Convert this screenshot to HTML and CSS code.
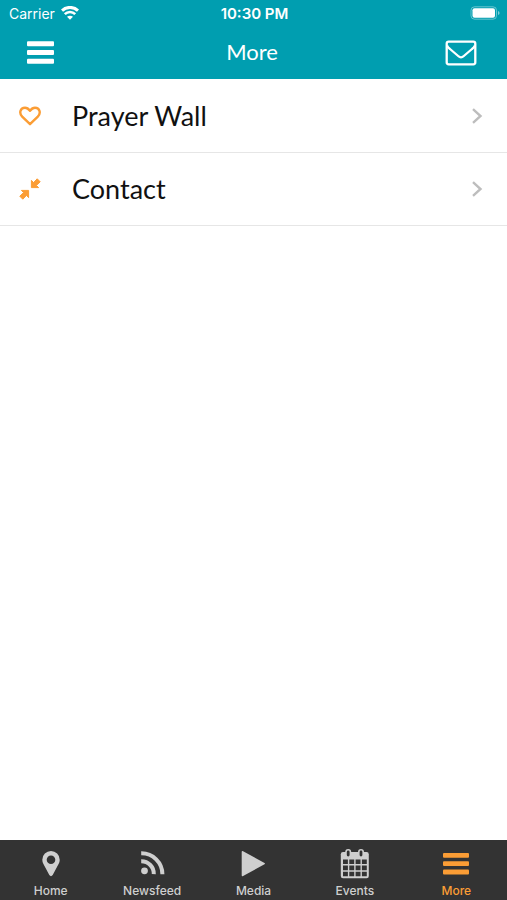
FILE: index.html
```html
<!DOCTYPE html>
<html lang="en">
<head>
  <meta charset="UTF-8">
  <meta name="viewport" content="width=device-width, initial-scale=1">
  <title>More</title>
  <link rel="stylesheet" href="styles.css">
</head>
<body>

  <header class="header">
    <div class="status-bar">
      <div class="carrier">
        <span>Carrier</span>
        <svg width="18" height="14" viewBox="0 0 18 14" fill="none" stroke="#fff" stroke-width="3">
          <path d="M1 4.600a11.6 11.6 0 0 1 16 0"/>
          <path d="M3.800 8.200a7.400 7.400 0 0 1 10.400 0" stroke-width="2.6"/>
          <path d="M6 10.800Q9 8.600 12 10.800L9 13.800z" fill="#fff" stroke="none"/>
        </svg>
      </div>
      <div class="time">10:30 PM</div>
      <div class="battery">
        <svg width="30" height="14" viewBox="0 0 30 14">
          <rect x="1" y="0.8" width="25.5" height="12.4" rx="3.5" fill="none" stroke="#fff" stroke-opacity="0.4"/>
          <rect x="2.5" y="2.3" width="22.5" height="9.4" rx="2" fill="#fff"/>
          <path d="M28 5v4q1.6-.7 1.6-2T28 5z" fill="#fff" fill-opacity="0.5"/>
        </svg>
      </div>
    </div>
    <div class="nav-bar">
      <button class="nav-button" type="button" aria-label="Menu">
        <svg width="27" height="23" viewBox="0 0 27 23" fill="#fff">
          <rect y="0.3" width="27" height="5" rx="1"/>
          <rect y="9" width="27" height="5" rx="1"/>
          <rect y="17.7" width="27" height="5" rx="1"/>
        </svg>
      </button>
      <h1 class="title">More</h1>
      <button class="nav-button nav-button-right" type="button" aria-label="Messages">
        <svg width="32" height="26" viewBox="0 0 32 26" fill="none" stroke="#fff" stroke-width="2.3" stroke-linejoin="round">
          <rect x="1.7" y="1.7" width="28.6" height="22.6" rx="2"/>
          <path d="M2 5.500Q3 7.500 5 9L13.200 16Q16 18.800 18.800 16L27 9Q29 7.500 30 5.500"/>
        </svg>
      </button>
    </div>
  </header>

  <main class="content">
    <ul class="menu-list">
      <li>
        <a class="menu-item" href="#prayer-wall">
          <svg class="item-icon" width="22" height="20" viewBox="0 0 22 20" fill="none" stroke="#fb9d35" stroke-width="2.4" stroke-linejoin="round">
            <path d="M11 18.200L3.200 10.600C-.3 7 1.300 1.700 6 1.700C8.300 1.700 9.800 3.100 11 4.700C12.200 3.100 13.700 1.700 16 1.700C20.700 1.700 22.300 7 18.800 10.600z"/>
          </svg>
          <span class="item-label">Prayer Wall</span>
          <svg width="12" height="16" viewBox="0 0 12 16" fill="none" stroke="#bdbdbd" stroke-width="2.4">
            <path d="M2 1.200L9.500 8L2 14.800"/>
          </svg>
        </a>
      </li>
      <li>
        <a class="menu-item" href="#contact">
          <svg class="item-icon" width="22" height="22" viewBox="0 0 22 22" fill="#fb9d35" stroke="#fb9d35" stroke-linejoin="round">
            <path d="M12.400 2.400v7.200h7.200l-2.200-2.200 3.800-3.600-3-3-3.600 3.800z"/>
            <path d="M9.600 19.600v-7.200H2.400l2.200 2.200-3.800 3.600 3 3 3.600-3.800z"/>
          </svg>
          <span class="item-label">Contact</span>
          <svg width="12" height="16" viewBox="0 0 12 16" fill="none" stroke="#bdbdbd" stroke-width="2.4">
            <path d="M2 1.200L9.500 8L2 14.800"/>
          </svg>
        </a>
      </li>
    </ul>
  </main>

  <nav class="tab-bar">
    <a class="tab" href="#home">
      <svg width="30" height="30" viewBox="0 0 30 30" fill="#cfcfcf">
        <path fill-rule="evenodd" d="M15 2a8.700 8.700 0 0 0-8.700 8.700c0 1.600.4 2.800 1 4.100l6 11.300q1.700 2.100 3.400 0l6-11.300c.6-1.300 1-2.500 1-4.100A8.700 8.700 0 0 0 15 2zm0 4.400a4.300 4.300 0 1 1 0 8.600 4.300 4.300 0 0 1 0-8.600z"/>
      </svg>
      <span>Home</span>
    </a>
    <a class="tab" href="#newsfeed">
      <svg width="30" height="30" viewBox="0 0 30 30" fill="none" stroke="#cfcfcf" stroke-width="4">
        <circle cx="7.500" cy="21.800" r="3.400" fill="#cfcfcf" stroke="none"/>
        <path d="M4.200 12.200A12.500 12.500 0 0 1 16.800 25.200"/>
        <path d="M4.200 4.300A20.900 20.900 0 0 1 25.400 25.200"/>
      </svg>
      <span>Newsfeed</span>
    </a>
    <a class="tab" href="#media">
      <svg width="30" height="30" viewBox="0 0 30 30" fill="#cfcfcf">
        <path d="M2.700 3q0-1.500 1.400-.8L25.500 14q1 .6 0 1.200L4.100 27q-1.400.7-1.400-.8z"/>
      </svg>
      <span>Media</span>
    </a>
    <a class="tab" href="#events">
      <svg width="30" height="30" viewBox="0 0 30 30">
        <rect x="0.800" y="3" width="28" height="26.200" rx="2.200" fill="#cfcfcf"/>
        <path fill="#333" d="M3 10.500h4.900v4.500H3zM9.300 10.500h4.900v4.500H9.300zM15.600 10.500h4.900v4.500h-4.900zM21.900 10.500h4.900v4.500h-4.900zM3 16.500h4.900v4.700H3zM9.300 16.500h4.900v4.700H9.300zM15.600 16.500h4.900v4.700h-4.900zM21.900 16.500h4.900v4.700h-4.900zM3 22.700h4.900v4.500H3zM9.300 22.700h4.900v4.500H9.300zM15.600 22.700h4.900v4.500h-4.900zM21.900 22.700h4.900v4.500h-4.900z"/>
        <rect x="6" y="0.800" width="4.400" height="7.400" rx="2.200" fill="#333" stroke="#cfcfcf" stroke-width="1.600"/>
        <rect x="18.800" y="0.800" width="4.400" height="7.400" rx="2.200" fill="#333" stroke="#cfcfcf" stroke-width="1.600"/>
      </svg>
      <span>Events</span>
    </a>
    <a class="tab active" href="#more">
      <svg width="30" height="30" viewBox="0 0 30 30" fill="#fb9d35">
        <rect x="2" y="4" width="26" height="4.800" rx="1"/>
        <rect x="2" y="12.300" width="26" height="4.800" rx="1"/>
        <rect x="2" y="20.600" width="26" height="4.800" rx="1"/>
      </svg>
      <span>More</span>
    </a>
  </nav>

</body>
</html>
```

FILE: styles.css
```css
* {
  box-sizing: border-box;
}

body {
  display: flex;
  flex-direction: column;
  min-height: 100vh;
  margin: 0;
  background: #fff;
  color: #111;
  font-family: Lato, sans-serif;
}

svg {
  display: block;
  flex: none;
}

.header {
  background: #009eb0;
  color: #fff;
}

.status-bar {
  display: grid;
  grid-template-columns: 1fr auto 1fr;
  align-items: center;
  height: 26px;
  padding: 0 7px 0 9px;
  font-family: Inter, sans-serif;
  font-size: 14px;
}

.carrier {
  display: flex;
  align-items: center;
  gap: 6px;
}

.time {
  font-size: 15px;
  font-weight: 600;
}

.battery {
  justify-self: end;
}

.nav-bar {
  display: grid;
  grid-template-columns: 1fr auto 1fr;
  align-items: center;
  height: 53px;
  padding: 0 30px 0 27px;
}

.nav-button {
  justify-self: start;
  padding: 0;
  border: none;
  background: none;
  cursor: pointer;
}

.nav-button-right {
  justify-self: end;
}

.title {
  margin: 0;
  padding-bottom: 2px;
  font-size: 22px;
  font-weight: 400;
}

.content {
  flex: 1;
}

.menu-list {
  margin: 0;
  padding: 1px 0 0;
  list-style: none;
}

.menu-item {
  display: flex;
  align-items: center;
  padding: 20px 24px 20px 19px;
  border-bottom: 1px solid #e6e6e6;
  color: #111;
  font-size: 27px;
  line-height: 32px;
  text-decoration: none;
}

.item-icon {
  margin-right: 31px;
}

.item-label {
  flex: 1;
}

.tab-bar {
  display: flex;
  background: #333;
}

.tab {
  display: flex;
  flex: 1;
  flex-direction: column;
  align-items: center;
  gap: 4px;
  padding: 9px 0 1px;
  color: #cfcfcf;
  font-family: Inter, sans-serif;
  font-size: 12px;
  font-weight: 500;
  line-height: 16px;
  text-decoration: none;
}

.tab.active {
  color: #fb9d35;
}
```
